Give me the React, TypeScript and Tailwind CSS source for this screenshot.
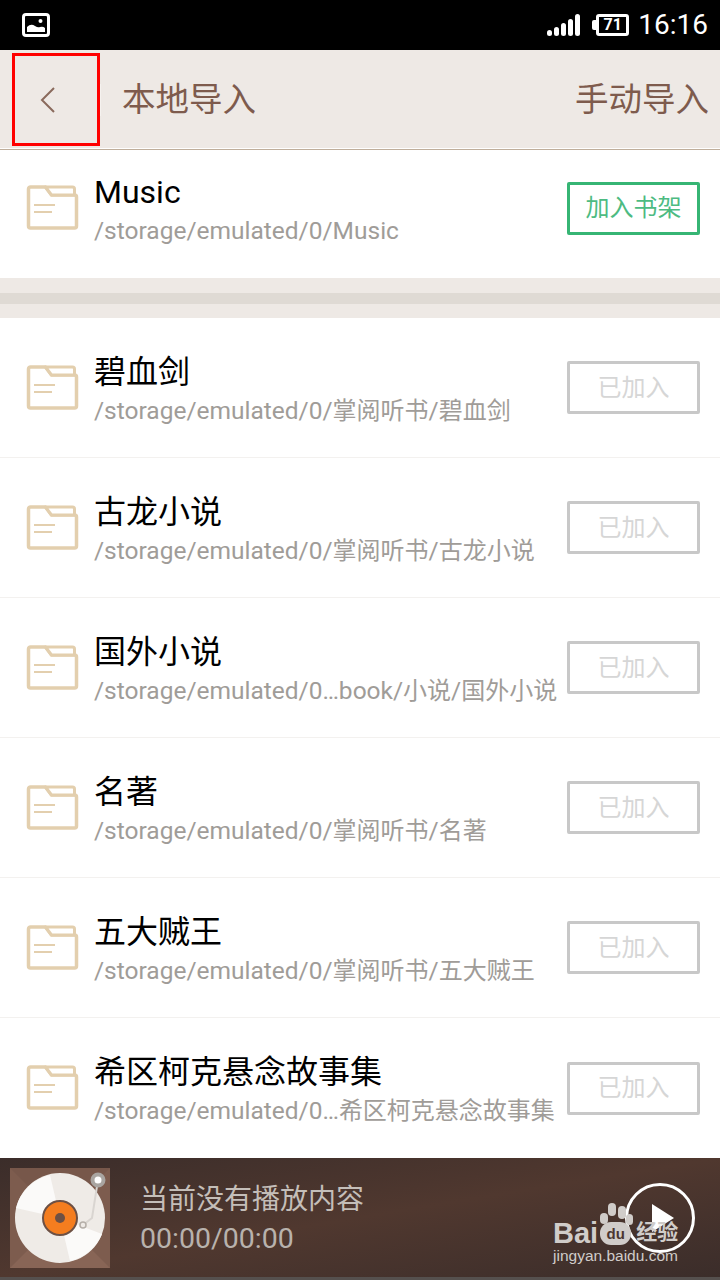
const font = { fontFamily: "Roboto, 'Noto Sans CJK SC', sans-serif" };

const rows = [
  { name: "碧血剑", path: "/storage/emulated/0/掌阅听书/碧血剑" },
  { name: "古龙小说", path: "/storage/emulated/0/掌阅听书/古龙小说" },
  { name: "国外小说", path: "/storage/emulated/0…book/小说/国外小说" },
  { name: "名著", path: "/storage/emulated/0/掌阅听书/名著" },
  { name: "五大贼王", path: "/storage/emulated/0/掌阅听书/五大贼王" },
  { name: "希区柯克悬念故事集", path: "/storage/emulated/0…希区柯克悬念故事集" },
];

function Folder() {
  return (
    <svg width="54" height="48" viewBox="0 0 54 48" fill="none" className="shrink-0">
      <path
        d="M3.5 5 a2 2 0 0 1 2-2 h15 l6 8 h23 a2 2 0 0 1 2 2 v29 a2 2 0 0 1-2 2 H5.5 a2 2 0 0 1-2-2 Z"
        fill="#fff"
        stroke="#e3cfae"
        strokeWidth="3.5"
        strokeLinejoin="round"
      />
      <path d="M20.5 3 h27 a2 2 0 0 1 2 2 v6 H26.5 Z" fill="#fff" stroke="#e3cfae" strokeWidth="3" strokeLinejoin="round" />
      <path d="M9 21 H30 M9 28 H27" stroke="#e3cfae" strokeWidth="2" />
    </svg>
  );
}

// the Chinese parts of a path run a little smaller than the Latin parts
function PathText({ path }: { path: string }) {
  return (
    <div className="whitespace-nowrap text-[24.5px] leading-[32px] text-[#a09c98]">
      {path.split(/([\u4e00-\u9fff]+)/).map((part, i) =>
        i % 2 === 1 ? (
          <span key={i} className="text-[24px]">
            {part}
          </span>
        ) : (
          part
        ),
      )}
    </div>
  );
}

function Row({ name, path, added, h }: { name: string; path: string; added?: boolean; h: string }) {
  return (
    <div className={`flex items-center pl-[25px] pr-5 ${h}`}>
      <Folder />
      <div className="ml-[15px] flex min-w-0 flex-1 flex-col">
        <div className="text-[32px] leading-[46px] text-black">{name}</div>
        <PathText path={path} />
      </div>
      {added ? (
        <div className="flex h-[53px] w-[133px] shrink-0 items-center justify-center rounded-[2px] border-[3px] border-[#c8c8c8] text-[24px] text-[#d6d6d6]">
          已加入
        </div>
      ) : (
        <div className="flex h-[53px] w-[133px] shrink-0 items-center justify-center rounded-[2px] border-[3px] border-[#36b574] text-[24px] text-[#4dbb82]">
          加入书架
        </div>
      )}
    </div>
  );
}

function Disc() {
  return (
    <svg width="100" height="100" viewBox="0 0 100 100" className="shrink-0">
      <rect width="100" height="100" fill="#7d5c4e" />
      <path d="M100 100 L0 100 L50 50 Z" fill="#886556" />
      <path d="M0 0 L100 0 L50 50 Z" fill="#77574a" />
      <circle cx="50" cy="50" r="45" fill="#efebe7" />
      <path d="M40 7 A45 45 0 0 0 6 40 L50 50 Z M60 93 A45 45 0 0 0 92 66 L50 50 Z" fill="#fbfaf9" />
      <circle cx="50" cy="50" r="17" fill="#f47d1f" stroke="#6d5044" strokeWidth="2" />
      <circle cx="50" cy="50" r="5" fill="#6d5044" />
      <path d="M88 12 L82 50 L73 57" fill="none" stroke="#d9d5d1" strokeWidth="2" />
      <circle cx="73" cy="57" r="3" fill="#efebe7" stroke="#b5afa9" strokeWidth="1.5" />
      <circle cx="88" cy="12" r="5.5" fill="#fff" stroke="#a9a5a1" strokeWidth="4" />
    </svg>
  );
}

export default function App() {
  return (
    <div className="relative flex h-[1280px] w-[720px] flex-col overflow-hidden bg-white" style={font}>
      {/* Status bar */}
      <div className="flex h-[50px] shrink-0 items-center justify-between bg-black pl-[22px] pr-3">
        <svg width="28" height="24" viewBox="0 0 28 24" fill="none">
          <rect x="1.5" y="1.5" width="25" height="21" rx="2.5" stroke="#fff" strokeWidth="3" />
          <path d="M5 19 v-5 q4-4 8-1 q3 2 5 1 q3-1 5 1 v4 Z" fill="#fff" />
          <circle cx="18.5" cy="8" r="2" fill="#fff" />
        </svg>
        <div className="flex items-center">
          <svg width="34" height="24" viewBox="0 0 34 24" fill="#fff">
            <rect x="0" y="17" width="5" height="6" rx="2.5" />
            <rect x="7" y="14" width="5" height="9" rx="2.5" />
            <rect x="14" y="10" width="5" height="13" rx="2.5" />
            <rect x="21" y="6" width="5" height="17" rx="2.5" />
            <rect x="28" y="1" width="5" height="22" rx="2.5" />
          </svg>
          <div className="ml-[11px] h-[10px] w-[4px] rounded-l-[2px] bg-white" />
          <div className="flex h-[22px] w-[33px] items-center justify-center rounded-[3px] border-[3px] border-white text-[16px] font-bold leading-none text-white">
            71
          </div>
          <div className="ml-[9px] text-[28px] leading-none text-white">16:16</div>
        </div>
      </div>

      {/* Header */}
      <div className="flex h-[98px] shrink-0 items-center justify-between bg-[#eee9e5] pr-[11px] pt-[2px]">
        <div className="flex items-center">
          <svg width="18" height="28" viewBox="0 0 18 28" fill="none" className="ml-[39px]">
            <path d="M15 2 L3 14 L15 26" stroke="#8a6a5c" strokeWidth="2" />
          </svg>
          <div className="ml-[43px] h-[32px] w-px bg-[#f5f2ef]" />
          <div className="ml-[21px] text-[33.5px] leading-none text-[#7e5b4d]">本地导入</div>
        </div>
        <div className="text-[33.5px] leading-none text-[#7e5b4d]">手动导入</div>
      </div>
      <div className="h-px shrink-0 bg-white" />
      <div className="h-px shrink-0 bg-[#bfae9b]" />

      {/* Back button highlight */}
      <div className="absolute left-3 top-[53px] h-[93px] w-[88px] border-[3px] border-[#ff0000]" />

      <Row name="Music" path="/storage/emulated/0/Music" h="h-[128px] shrink-0 pb-[12px]" />

      <div className="flex h-[40px] shrink-0 flex-col justify-center bg-[#eee9e5]">
        <div className="h-[11px] bg-[#dfdad4]" />
      </div>

      {/* Imported folders */}
      <div className="flex flex-col">
        {rows.map((row, i) => (
          <div key={row.name} className={i < rows.length - 1 ? "border-b border-b-[#f3f1ef]" : ""}>
            <Row name={row.name} path={row.path} added h={i < rows.length - 1 ? "h-[139px]" : "h-[140px]"} />
          </div>
        ))}
      </div>

      {/* Player */}
      <div className="relative flex h-[119px] shrink-0 items-center bg-gradient-to-br from-[#3b2d2a] via-[#50382f] to-[#3b2d2a] pl-[10px]">
        <Disc />
        <div className="ml-[30px] flex flex-col pt-[2px]">
          <div className="text-[28px] leading-[40px] text-[#c4beb9]">当前没有播放内容</div>
          <div className="text-[28.5px] leading-[38px] text-[#b8b2ad]">00:00/00:00</div>
        </div>
        <div className="absolute right-[25px] top-[25px] flex h-[70px] w-[70px] items-center justify-center rounded-full border-[3px] border-white">
          <div className="ml-[5px] h-0 w-0 border-y-[14px] border-l-[22px] border-y-transparent border-l-white" />
        </div>
        {/* Watermark */}
        <div className="absolute left-[553px] top-[45px] flex flex-col text-[#d0ccc9]">
          <div className="flex h-[42px] items-end" style={{ fontFamily: "'Liberation Sans', 'Noto Sans CJK SC', sans-serif" }}>
            <span className="text-[29px] font-bold leading-[24px]">Bai</span>
            <span className="relative ml-[2px] flex h-[23px] w-[31px] items-center justify-center rounded-[11px] bg-[#d0ccc9] text-[15px] font-bold leading-none text-[#4a3530]">
              du
              <span className="absolute -top-[9px] left-[0px] h-[11px] w-[8px] rounded-full bg-[#d0ccc9]" />
              <span className="absolute -top-[19px] left-[8px] h-[13px] w-[8px] rounded-full bg-[#d0ccc9]" />
              <span className="absolute -top-[16px] left-[18px] h-[13px] w-[8px] rounded-full bg-[#d0ccc9]" />
              <span className="absolute -top-[8px] left-[26px] h-[11px] w-[7px] rounded-full bg-[#d0ccc9]" />
            </span>
            <span className="mb-[3px] ml-[5px] text-[21px] font-bold leading-none">经验</span>
          </div>
          <div className="mt-[1px] whitespace-nowrap text-[15.5px] leading-[20px]" style={{ fontFamily: "'Liberation Sans', sans-serif" }}>
            jingyan.baidu.com
          </div>
        </div>
      </div>
      <div className="h-[3px] shrink-0 bg-[#55504e]" />
    </div>
  );
}
